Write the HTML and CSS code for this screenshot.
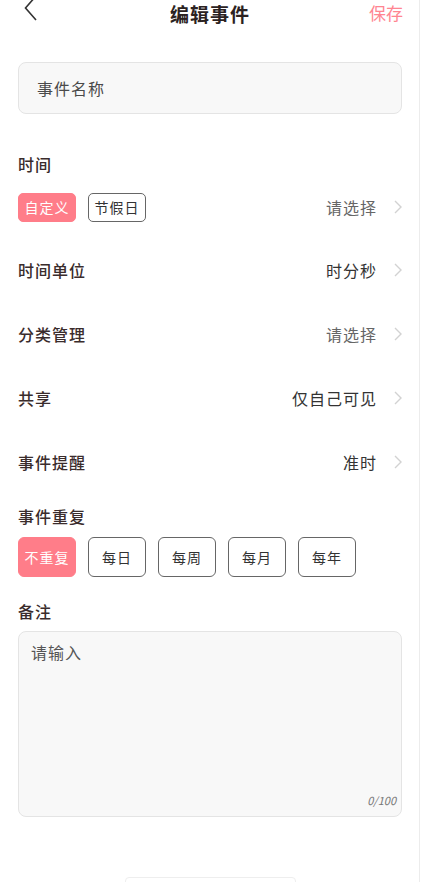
FILE: index.html
```html
<!DOCTYPE html>
<html lang="zh-CN">
<head>
  <meta charset="UTF-8" />
  <meta name="viewport" content="width=device-width, initial-scale=1.0"/>
  <title>编辑事件</title>
  <link rel="stylesheet" href="styles.css">
</head>
<body>
  <div class="page">
    <div class="header">
      <svg class="back" width="14" height="22" viewBox="0 0 14 22">
        <polyline points="12,-4 1.5,8 12,20" />
      </svg>
      <div class="title">编辑事件</div>
      <div class="save">保存</div>
    </div>

    <div class="name-input">事件名称</div>

    <div class="label first">时间</div>
    <div class="row time-row">
      <div class="chips">
        <span class="chip small active">自定义</span>
        <span class="chip small">节假日</span>
      </div>
      <div class="value muted">请选择<svg class="arrow" width="8" height="14" viewBox="0 0 8 14"><polyline points="1,1 7,7 1,13" /></svg></div>
    </div>

    <div class="row">
      <div class="row-name">时间单位</div>
      <div class="value">时分秒<svg class="arrow" width="8" height="14" viewBox="0 0 8 14"><polyline points="1,1 7,7 1,13" /></svg></div>
    </div>
    <div class="row">
      <div class="row-name">分类管理</div>
      <div class="value muted">请选择<svg class="arrow" width="8" height="14" viewBox="0 0 8 14"><polyline points="1,1 7,7 1,13" /></svg></div>
    </div>
    <div class="row">
      <div class="row-name">共享</div>
      <div class="value">仅自己可见<svg class="arrow" width="8" height="14" viewBox="0 0 8 14"><polyline points="1,1 7,7 1,13" /></svg></div>
    </div>
    <div class="row">
      <div class="row-name">事件提醒</div>
      <div class="value">准时<svg class="arrow" width="8" height="14" viewBox="0 0 8 14"><polyline points="1,1 7,7 1,13" /></svg></div>
    </div>

    <div class="label repeat-label">事件重复</div>
    <div class="chips repeat">
      <span class="chip big active">不重复</span>
      <span class="chip big">每日</span>
      <span class="chip big">每周</span>
      <span class="chip big">每月</span>
      <span class="chip big">每年</span>
    </div>

    <div class="label note-label">备注</div>
    <div class="note">
      <div class="note-placeholder">请输入</div>
      <div class="counter">0/100</div>
    </div>

    <div class="bottom-btn"></div>
  </div>
</body>
</html>
```

FILE: styles.css
```css
body {
  margin: 0;
  background: #fff;
  font-family: "Noto Sans CJK SC", "Noto Sans", sans-serif;
  color: #3a2c2c;
  overflow: hidden;
}

.page {
  width: 384px;
  height: 882px;
  padding: 0 17px 0 18px;
  border-right: 1px solid #ececec;
  overflow: hidden;
}

.header {
  height: 28px;
  display: flex;
  align-items: flex-start;
  justify-content: space-between;
  position: relative;
}

.back {
  margin-left: 6px;
  overflow: visible;
}

.back polyline {
  fill: none;
  stroke: #333;
  stroke-width: 1.6;
}

.title {
  position: absolute;
  left: 0;
  right: 0;
  top: 0;
  text-align: center;
  font-size: 19px;
  font-weight: bold;
  color: #2b2222;
  line-height: normal;
  letter-spacing: 1px;
  pointer-events: none;
}

.save {
  font-size: 17px;
  color: #ff8591;
  line-height: normal;
  margin-right: -1px;
}

.name-input {
  margin-top: 34px;
  height: 52px;
  box-sizing: border-box;
  border: 1px solid #e4e4e4;
  border-radius: 8px;
  background: #f8f8f8;
  padding-left: 18px;
  display: flex;
  align-items: center;
  font-size: 16px;
  color: #4a4a4a;
  letter-spacing: 1px;
}

.label {
  height: 24px;
  line-height: 24px;
  font-size: 16px;
  font-weight: 500;
  letter-spacing: 1px;
  color: #3a2c2c;
}

.label.first {
  margin-top: 38px;
}

.row {
  height: 64px;
  display: flex;
  align-items: center;
  justify-content: space-between;
}

.row.time-row {
  height: 62px;
}

.row-name {
  font-size: 16px;
  font-weight: 500;
  letter-spacing: 1px;
  color: #3a2c2c;
}

.value {
  display: flex;
  align-items: center;
  gap: 17px;
  font-size: 16px;
  letter-spacing: 1px;
  color: #333;
}

.value.muted {
  color: #666;
}

.arrow polyline {
  fill: none;
  stroke: #d2d2d2;
  stroke-width: 1.4;
}

.chips {
  display: flex;
  gap: 12px;
}

.chip {
  box-sizing: border-box;
  width: 58px;
  display: flex;
  align-items: center;
  justify-content: center;
  border: 1.5px solid #666;
  border-radius: 6px;
  font-size: 14px;
  color: #333;
  letter-spacing: 1px;
}

.chip.small {
  height: 29px;
  border-radius: 5px;
}

.chip.big {
  height: 40px;
}

.chip.active {
  background: #ff7d89;
  border-color: #ff7d89;
  color: #fff;
}

.repeat-label {
  margin-top: 10px;
}

.repeat {
  margin-top: 9px;
}

.note-label {
  margin-top: 22px;
}

.note {
  margin-top: 8px;
  height: 186px;
  box-sizing: border-box;
  border: 1px solid #e4e4e4;
  border-radius: 8px;
  background: #f8f8f8;
  padding: 8px 12px;
  display: flex;
  flex-direction: column;
  justify-content: space-between;
}

.note-placeholder {
  font-size: 16px;
  color: #555;
  letter-spacing: 1px;
}

.counter {
  text-align: right;
  font-size: 11px;
  font-style: italic;
  color: #777;
  margin-right: -7px;
}

.bottom-btn {
  margin: 60px auto 0;
  width: 169px;
  height: 40px;
  border: 1px solid #eee;
  border-radius: 4px;
}
```
